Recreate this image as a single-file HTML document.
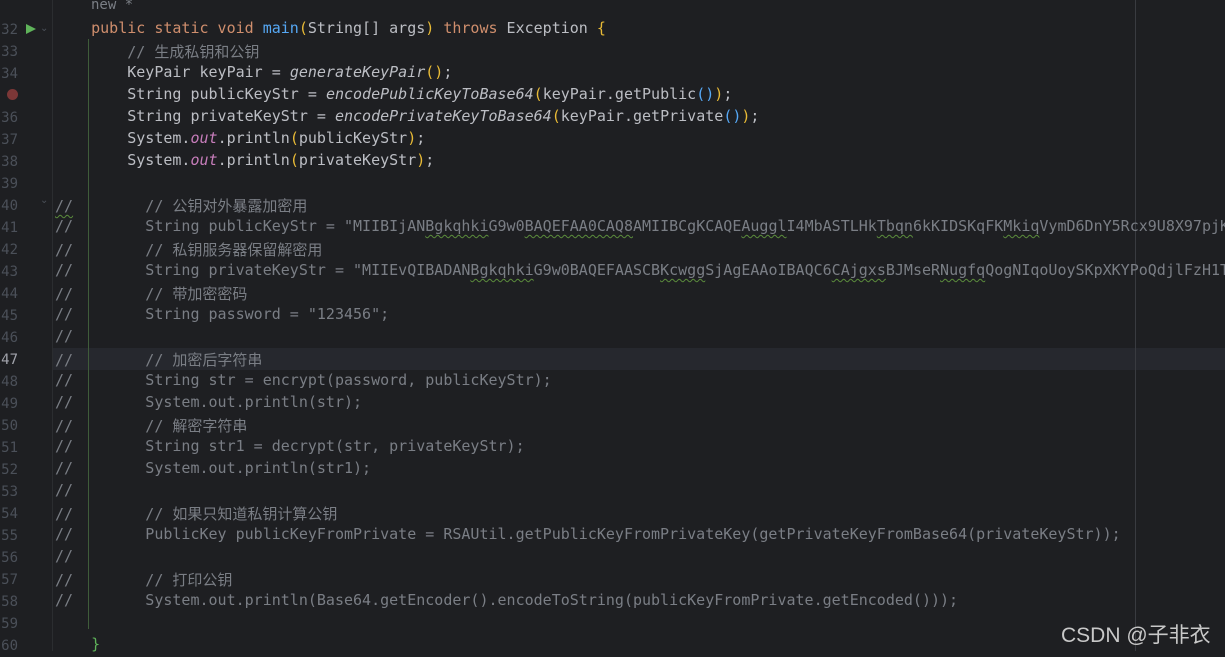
<!DOCTYPE html>
<html><head><meta charset="utf-8"><style>
html,body{margin:0;padding:0;background:#1e1f22;width:1225px;height:651px;overflow:hidden}
.g{position:absolute;left:0;top:0;width:52px;height:651px;background:#1e1f22;border-right:1px solid #2b2d30}
.ln{position:absolute;left:0;width:18px;text-align:right;font:14px "DejaVu Sans Mono","Liberation Mono",monospace;color:#4b5059;height:22px;line-height:22px}
.l{position:absolute;left:55px;height:22px;line-height:22px;white-space:pre;font:15px "DejaVu Sans Mono","Liberation Mono","Noto Sans CJK SC",monospace;color:#bcbec4}
.c{color:#7a7e85}
.k{color:#cf8e6d}
.f{color:#56a8f5}
.i{font-style:italic}
.p{color:#c77dbb;font-style:italic}
.y{color:#e8ba36}
.w{text-decoration:underline wavy #5b8c3c;text-underline-offset:3px;text-decoration-thickness:1px}
.hl{position:absolute;left:0;top:348px;width:1225px;height:22px;background:#26282e}
#t{position:absolute;left:0;top:2px;width:1225px;height:651px}
</style></head><body>
<div class="hl"></div>
<div class="g"></div>
<div style="position:absolute;left:88px;top:39px;width:1px;height:590px;background:#3f5c3a"></div>
<div style="position:absolute;left:1135px;top:0;width:1px;height:651px;background:#393b40"></div>
<div id="t">
<div class="l c" style="top:-5px;left:91px;font-size:14px">new *</div>
<div style="position:absolute;left:26px;top:22px;width:0;height:0;border-left:10px solid #5fb35a;border-top:5px solid transparent;border-bottom:5px solid transparent"></div>
<div style="position:absolute;left:40px;top:21px;color:#4b5059;font:10px sans-serif">⌄</div>
<div style="position:absolute;left:40px;top:193px;color:#4b5059;font:10px sans-serif">⌄</div>
<div style="position:absolute;left:7px;top:87px;width:11px;height:11px;border-radius:50%;background:#7c3737"></div>
<div id="n"></div>
<div class="l" style="top:17px">    <span class="k">public static void </span><span class="f">main</span><span class="y">(</span>String[] args<span class="y">)</span> <span class="k">throws</span> Exception <span class="y">{</span></div>
<div class="l c" style="top:39px">        // 生成私钥和公钥</div>
<div class="l" style="top:61px">        KeyPair keyPair = <span class="i">generateKeyPair</span><span class="y">()</span>;</div>
<div class="l" style="top:83px">        String publicKeyStr = <span class="i">encodePublicKeyToBase64</span><span class="y">(</span>keyPair.getPublic<span class="f">()</span><span class="y">)</span>;</div>
<div class="l" style="top:105px">        String privateKeyStr = <span class="i">encodePrivateKeyToBase64</span><span class="y">(</span>keyPair.getPrivate<span class="f">()</span><span class="y">)</span>;</div>
<div class="l" style="top:127px">        System.<span class="p">out</span>.println<span class="y">(</span>publicKeyStr<span class="y">)</span>;</div>
<div class="l" style="top:149px">        System.<span class="p">out</span>.println<span class="y">(</span>privateKeyStr<span class="y">)</span>;</div>
<div class="l c" style="top:193px"><span class="w">//</span>        // 公钥对外暴露加密用</div>
<div class="l c" style="top:215px">//        String publicKeyStr = "MIIBIjAN<span class="w">Bgkqhki</span>G9w0<span class="w">BAQEFAA0CAQ8</span>AMIIBCgKCAQE<span class="w">Auggl</span>I4MbASTLHk<span class="w">Tbqn</span>6kKIDSKqFK<span class="w">Mkiq</span>VymD6DnY5Rcx9U8X97pjK/</div>
<div class="l c" style="top:237px">//        // 私钥服务器保留解密用</div>
<div class="l c" style="top:259px">//        String privateKeyStr = "MIIEvQIBADAN<span class="w">Bgkqhki</span>G9w0BAQEFAASCB<span class="w">Kcwgg</span>SjAgEAAoIBAQC6<span class="w">CAjgxs</span>BJMseR<span class="w">Nugfq</span>QogNIqoUoySKpXKYPoQdjlFzH1T</div>
<div class="l c" style="top:281px">//        // 带加密密码</div>
<div class="l c" style="top:303px">//        String password = "123456";</div>
<div class="l c" style="top:325px">//</div>
<div class="l c" style="top:347px">//        // 加密后字符串</div>
<div class="l c" style="top:369px">//        String str = encrypt(password, publicKeyStr);</div>
<div class="l c" style="top:391px">//        System.out.println(str);</div>
<div class="l c" style="top:413px">//        // 解密字符串</div>
<div class="l c" style="top:435px">//        String str1 = decrypt(str, privateKeyStr);</div>
<div class="l c" style="top:457px">//        System.out.println(str1);</div>
<div class="l c" style="top:479px">//</div>
<div class="l c" style="top:501px">//        // 如果只知道私钥计算公钥</div>
<div class="l c" style="top:523px">//        PublicKey publicKeyFromPrivate = RSAUtil.getPublicKeyFromPrivateKey(getPrivateKeyFromBase64(privateKeyStr));</div>
<div class="l c" style="top:545px">//</div>
<div class="l c" style="top:567px">//        // 打印公钥</div>
<div class="l c" style="top:589px">//        System.out.println(Base64.getEncoder().encodeToString(publicKeyFromPrivate.getEncoded()));</div>
<div class="l" style="top:633px">    <span style="color:#5fb35a">}</span></div>
</div>
<div style="position:absolute;left:1061px;top:619px;font:21px 'Liberation Sans','Noto Sans CJK SC',sans-serif;color:#c8c8c8">CSDN @子非衣</div>
<script>
var h='';for(var n=32;n<=60;n++){if(n==35)continue;var t=17+(n-32)*22;h+='<div class="ln" style="top:'+t+'px;'+(n==47?'color:#a1a3ab':'')+'">'+n+'</div>';}
document.getElementById('n').innerHTML=h;
</script>
</body></html>
